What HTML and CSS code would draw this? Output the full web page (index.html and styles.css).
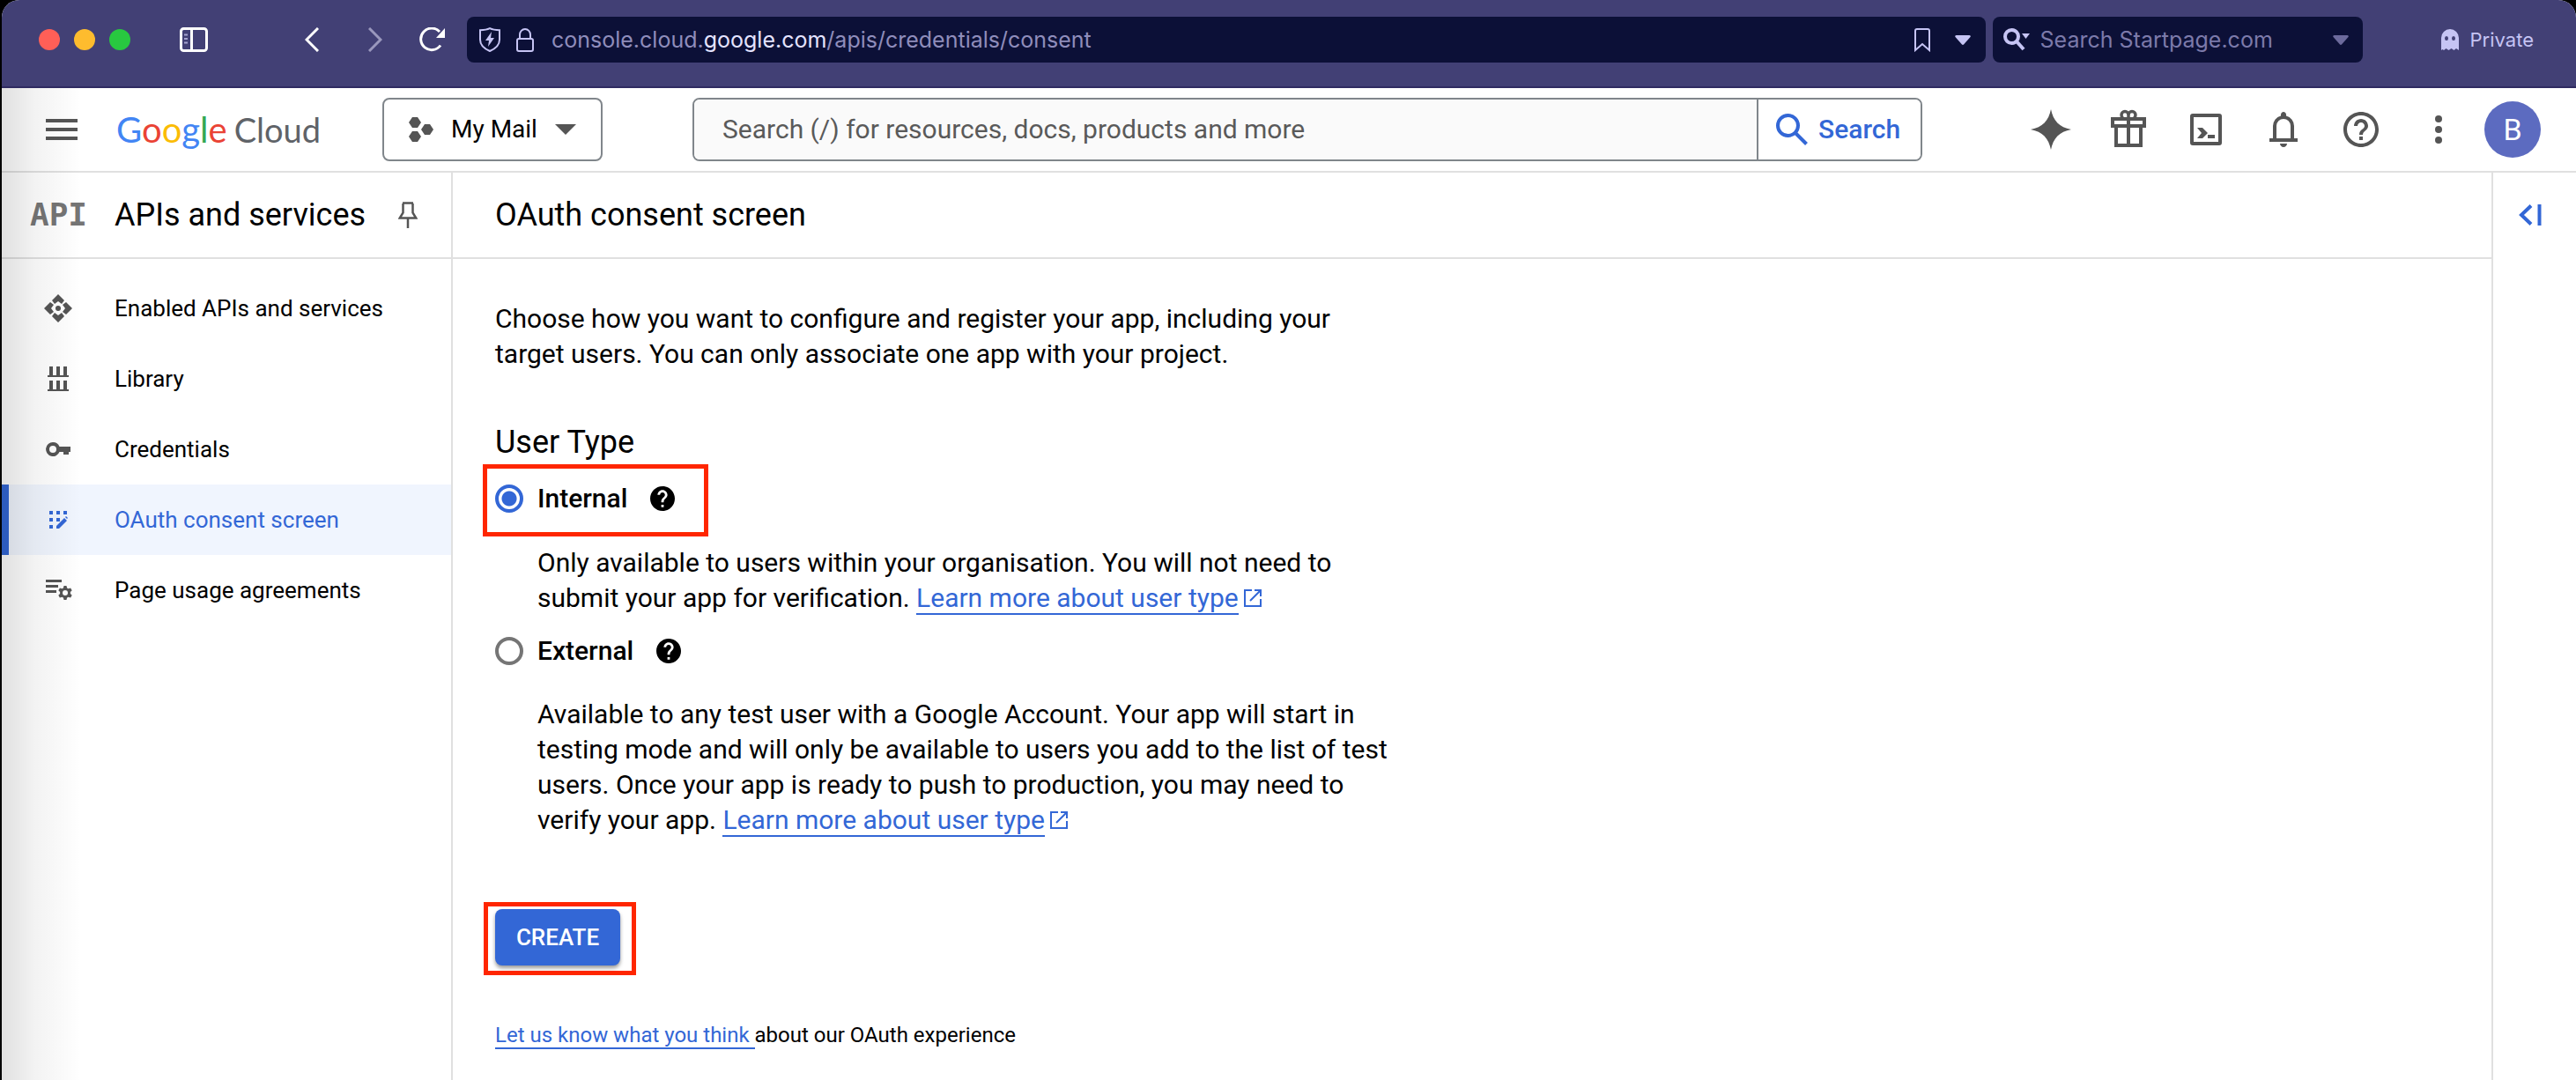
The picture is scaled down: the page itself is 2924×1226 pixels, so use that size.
FILE: index.html
```html
<!DOCTYPE html>
<html lang="en-GB">
<head>
<meta charset="utf-8">
<title>OAuth consent screen – APIs and services</title>
<link rel="stylesheet" href="styles.css">
</head>
<body>
<div class="window">
  <header class="chrome">
    <div class="lights">
      <button class="light light-close" aria-label="Close"></button>
      <button class="light light-min" aria-label="Minimise"></button>
      <button class="light light-max" aria-label="Zoom"></button>
    </div>
    <button class="icon-btn tabs-btn" aria-label="Tabs panel"><svg width="32" height="28" viewBox="0 0 32 28" fill="none" stroke="#fff" stroke-width="3"><rect x="1.500" y="1.500" width="29" height="25" rx="3"/><path d="M13.500 1v26"/><path d="M5 8.500h4M5 13h4M5 17.500h4" stroke="#a5a3cf" stroke-width="2"/></svg></button>
    <button class="icon-btn back-btn" aria-label="Back"><svg width="16" height="28" viewBox="0 0 16 28" fill="none" stroke="#fff" stroke-width="3"><path d="M15 1 2 14l13 13"/></svg></button>
    <button class="icon-btn forward-btn" aria-label="Forward"><svg width="16" height="28" viewBox="0 0 16 28" fill="none" stroke="#9a98bd" stroke-width="3"><path d="M1 1l13 13L1 27"/></svg></button>
    <button class="icon-btn reload-btn" aria-label="Reload"><svg width="30" height="28" viewBox="0 0 30 28" fill="none" stroke="#fff" stroke-width="3"><path d="M24 20.500A12.300 12.300 0 1 1 23 5"/><path d="M29 1v11H19z" fill="#fff" stroke="none"/></svg></button>
    <div class="address">
      <svg width="24" height="28" viewBox="0 0 24 28" fill="none" stroke="#c6c4f4" stroke-width="2"><path d="M12 1.200c3 1.500 7 2 11 2V14c0 6-4 10-11 13C5 24 1 20 1 14V3.200c4 0 8-.5 11-2z"/><path d="M14 5 7 15h4l-1 7 7-10h-4z" fill="#c6c4f4" stroke="none"/></svg>
      <svg class="lock" width="20" height="27" viewBox="0 0 20 27" fill="none" stroke="#c6c4f4" stroke-width="2"><rect x="1" y="12" width="18" height="14" rx="2"/><path d="M4 12V7.500a6 6.500 0 0 1 12 0V12"/></svg>
      <div class="url" role="textbox" aria-label="Address" contenteditable="true" spellcheck="false">console.cloud.<span class="url-host">google.com</span>/apis/credentials/consent</div>
      <button class="icon-btn" aria-label="Bookmark"><svg width="18" height="27" viewBox="0 0 18 27" fill="none" stroke="#c6c4f4" stroke-width="2"><path d="M1 25V3a2 2 0 0 1 2-2h12a2 2 0 0 1 2 2v22l-8-7z"/></svg></button>
      <button class="icon-btn" aria-label="Address history"><svg width="18" height="11" viewBox="0 0 18 11"><path d="M1.500 0h15q2 .5 1 2L10 10.500q-1 .8-2 0L.5 2q-1-1.500 1-2z" fill="#c6c4f4"/></svg></button>
    </div>
    <div class="startpage">
      <svg width="30" height="26" viewBox="0 0 30 26" fill="none" stroke="#c6c4f4" stroke-width="4"><circle cx="9.500" cy="9.500" r="7.500"/><path d="m15 15 8 9"/><path d="M21 6h9l-4.500 6z" fill="#c6c4f4" stroke="none"/></svg>
      <input class="startpage-input" type="text" placeholder="Search Startpage.com" aria-label="Search Startpage.com">
      <button class="icon-btn" aria-label="Search engines"><svg width="18" height="11" viewBox="0 0 18 11"><path d="M1.500 0h15q2 .5 1 2L10 10.500q-1 .8-2 0L.5 2q-1-1.500 1-2z" fill="#6c6a9c"/></svg></button>
    </div>
    <div class="private"><svg width="22" height="24" viewBox="0 0 22 24"><path d="M1 24V10a10 10 0 0 1 20 0v14l-3-2-2.500 2-3-2-3 2-3-2L4 24l-1.500-1z" fill="#c6c4f4"/><g fill="#424075"><ellipse cx="7" cy="10.500" rx="2" ry="2.500"/><ellipse cx="15" cy="10.500" rx="2" ry="2.500"/></g></svg>Private</div>
  </header>

  <div class="page">
    <header class="topbar">
      <button class="icon-btn menu-btn" aria-label="Main menu"><svg width="36" height="24" viewBox="0 0 36 24" fill="#555"><path d="M0 0h36v4H0zM0 10h36v4H0zM0 20h36v4H0z"/></svg></button>
      <a class="logo" href="#"><span class="logo-google"><span class="g-blue">G</span><span class="g-red">o</span><span class="g-yellow">o</span><span class="g-blue">g</span><span class="g-green">l</span><span class="g-red">e</span></span><span class="logo-cloud">Cloud</span></a>
      <button class="project"><svg width="28" height="28" viewBox="0 0 28 28" fill="#555"><path d="M4 0h6l4 6-4 6H4L0 6zM4 16h6l4 6-4 6H4l-4-6zM18 8h6l4 6-4 6h-6l-4-6z"/></svg><span>My Mail</span><svg width="24" height="12" viewBox="0 0 24 12"><path d="M0 0h24L12 12z" fill="#555"/></svg></button>
      <form class="search">
        <input class="search-input" type="text" placeholder="Search (/) for resources, docs, products and more" aria-label="Search (/) for resources, docs, products and more">
        <button class="search-btn" type="button"><svg width="36" height="36" viewBox="0 0 36 36" fill="none" stroke="#3367d6" stroke-width="4"><circle cx="13.500" cy="13.500" r="11.500"/><path d="m21.500 21.500 13 13"/></svg>Search</button>
      </form>
      <nav class="tools" aria-label="Tools">
        <button class="icon-btn" aria-label="Gemini"><svg viewBox="0 0 48 48"><path d="M24 1c2.500 13 9.500 20.500 23 23-13.500 2.500-20.500 10-23 23C21.500 34 14.500 26.500 1 24 14.500 21.500 21.500 14 24 1z"/></svg></button>
        <button class="icon-btn" aria-label="Free trial"><svg viewBox="0 0 48 48" fill="none" stroke="#555" stroke-width="4"><path d="M6 12h36v8H6zM10 20v22h28V20M24 10v32"/><path d="M24 11V7.500a4 4 0 0 0-8 0q0 2 1.500 3.500M24 11V7.500a4 4 0 0 1 8 0q0 2-1.500 3.500" stroke-width="3.500"/></svg></button>
        <button class="icon-btn" aria-label="Cloud Shell"><svg viewBox="0 0 48 48"><path fill-rule="evenodd" d="M9 6h30a3 3 0 0 1 3 3v30a3 3 0 0 1-3 3H9a3 3 0 0 1-3-3V9a3 3 0 0 1 3-3zm1 4v28h28V10z"/><path d="M14 22h6l6 6-6 6h-6l5-6zM26 30h8v4h-8z"/></svg></button>
        <button class="icon-btn" aria-label="Notifications"><svg viewBox="0 0 24 24"><path d="M4 19v-2h2v-7q0-2.075 1.250-3.687T10.500 4.200v-.7q0-.625.438-1.062T12 2t1.063.438T13.500 3.500v.7q2 .5 3.250 2.113T18 10v7h2v2zm8 3q-.825 0-1.412-.587T10 20h4q0 .825-.587 1.413T12 22m-4-5h8v-7q0-1.650-1.175-2.825T12 6 9.175 7.175 8 10z"/></svg></button>
        <button class="icon-btn" aria-label="Help"><svg viewBox="0 0 24 24"><path d="M11 18h2v-2h-2v2zm1-16C6.480 2 2 6.480 2 12s4.480 10 10 10 10-4.480 10-10S17.520 2 12 2zm0 18c-4.410 0-8-3.590-8-8s3.590-8 8-8 8 3.590 8 8-3.590 8-8 8zm0-14c-2.210 0-4 1.790-4 4h2c0-1.100.9-2 2-2s2 .9 2 2c0 2-3 1.750-3 5h2c0-2.250 3-2.500 3-5 0-2.210-1.790-4-4-4z"/></svg></button>
        <button class="icon-btn" aria-label="More"><svg viewBox="0 0 48 48"><circle cx="24" cy="12" r="4"/><circle cx="24" cy="24" r="4"/><circle cx="24" cy="36" r="4"/></svg></button>
        <button class="avatar" aria-label="Account: B">B</button>
      </nav>
    </header>

    <div class="layout">
      <aside class="sidebar">
        <div class="side-head">
          <span class="api-mark">API</span>
          <h2 class="side-title">APIs and services</h2>
          <button class="icon-btn" aria-label="Pin"><svg width="22" height="30" viewBox="0 0 22 30" fill="none" stroke="#555" stroke-width="2.500"><path d="M5 1.500h12M5.500 2v10.500L1.800 18.500h18.400L16.500 12.500V2M11 19v11"/></svg></button>
        </div>
        <nav class="side-nav" aria-label="APIs and services">
          <a class="side-link" href="#"><svg viewBox="0 0 32 32"><path d="M16 0l7 7-3 4-4-3-4 3-3-4zM16 32l7-7-3-4-4 3-4-3-3 4zM0 16l7-7 4 3-3 4 3 4-4 3zM32 16l-7-7-4 3 3 4-3 4 4 3z"/><circle cx="16" cy="16" r="3"/></svg>Enabled APIs and services</a>
          <a class="side-link" href="#"><svg viewBox="0 0 32 32"><path d="M6 2h4v10h4V2h4v10h4V2h4v10h2v2H4v-2h2zM6 18h4v10h4V18h4v10h4V18h4v10h2v2H4v-2h2z"/></svg>Library</a>
          <a class="side-link" href="#"><svg viewBox="0 0 32 32"><path fill-rule="evenodd" d="M10 8a8 8 0 0 1 7.500 5H30v6h-2v3h-6v-3h-4.500A8 8 0 1 1 10 8zm0 4a4 4 0 1 0 0 8 4 4 0 0 0 0-8z"/></svg>Credentials</a>
          <a class="side-link side-link-active" href="#" aria-current="page"><svg viewBox="0 0 32 32"><path d="M6 6h4v4H6zM14 6h4v4h-4zM22 6h4v4h-4zM6 14h4v4H6zM14 14h4v4h-4zM6 22h4v4H6zM14 26v-3l9-9 3 3-9 9zM24 13l1-1 2 2-1 1z"/></svg>OAuth consent screen</a>
          <a class="side-link" href="#"><svg viewBox="0 0 32 32"><path d="M2 4h18v3H2zM2 10h14v3H2zM2 16h12v3H2z"/><path fill-rule="evenodd" d="M22.500 11h3l.6 2.400 1.600.9 2.400-.7 1.600 2.700-1.800 1.700v2l1.800 1.700-1.600 2.700-2.400-.7-1.600.9-.6 2.400h-3l-.6-2.400-1.600-.9-2.400.7-1.600-2.700 1.800-1.700v-2l-1.800-1.700 1.600-2.700 2.400.7 1.600-.9zM24 16a3 3 0 1 0 0 6 3 3 0 0 0 0-6z"/></svg>Page usage agreements</a>
        </nav>
      </aside>

      <main class="main">
        <div class="main-head"><h1 class="main-title">OAuth consent screen</h1></div>
        <div class="content">
          <p class="intro">Choose how you want to configure and register your app, including your target users. You can only associate one app with your project.</p>
          <h2 class="section-title" id="user-type">User Type</h2>
          <div role="radiogroup" aria-labelledby="user-type">
            <div class="option option-marked">
              <input class="radio" type="radio" name="type" id="internal" checked>
              <label class="option-label" for="internal">Internal</label>
              <button class="icon-btn" aria-label="About internal"><svg class="help" viewBox="2 2 20 20"><path d="M12 2C6.480 2 2 6.480 2 12s4.480 10 10 10 10-4.480 10-10S17.520 2 12 2zm1 17h-2v-2h2v2zm2.070-7.750l-.9.920C13.450 12.900 13 13.500 13 15h-2v-.5c0-1.100.450-2.100 1.170-2.830l1.240-1.260c.370-.360.590-.860.590-1.410 0-1.100-.9-2-2-2s-2 .9-2 2H8c0-2.210 1.790-4 4-4s4 1.790 4 4c0 .880-.360 1.680-.930 2.250z"/></svg></button>
            </div>
            <p class="option-text">Only available to users within your organisation. You will not need to submit your app for verification. <a class="link" href="#">Learn more about user type</a><svg class="ext" viewBox="0 0 20 20" fill="none" stroke="#3367d6" stroke-width="2"><path d="M9 1H1v18h18v-8M12 1h7v7M19 1 7 13"/></svg></p>
            <div class="option option-plain">
              <input class="radio" type="radio" name="type" id="external">
              <label class="option-label" for="external">External</label>
              <button class="icon-btn" aria-label="About external"><svg class="help" viewBox="2 2 20 20"><path d="M12 2C6.480 2 2 6.480 2 12s4.480 10 10 10 10-4.480 10-10S17.520 2 12 2zm1 17h-2v-2h2v2zm2.070-7.750l-.9.920C13.450 12.900 13 13.500 13 15h-2v-.5c0-1.100.450-2.100 1.170-2.830l1.240-1.260c.370-.360.590-.860.590-1.410 0-1.100-.9-2-2-2s-2 .9-2 2H8c0-2.210 1.790-4 4-4s4 1.790 4 4c0 .880-.360 1.680-.930 2.250z"/></svg></button>
            </div>
            <p class="option-text">Available to any test user with a Google Account. Your app will start in testing mode and will only be available to users you add to the list of test users. Once your app is ready to push to production, you may need to verify your app. <a class="link" href="#">Learn more about user type</a><svg class="ext" viewBox="0 0 20 20" fill="none" stroke="#3367d6" stroke-width="2"><path d="M9 1H1v18h18v-8M12 1h7v7M19 1 7 13"/></svg></p>
          </div>
          <div class="create-mark"><button class="create">CREATE</button></div>
          <p class="feedback"><a class="link" href="#">Let us know what you think </a>about our OAuth experience</p>
        </div>
      </main>

      <aside class="panel">
        <button class="icon-btn" aria-label="Show panel"><svg width="26" height="24" viewBox="0 0 26 24" fill="none" stroke="#3367d6" stroke-width="4"><path d="M14 1.500 3 12l11 10.500M23.500 0v24"/></svg></button>
      </aside>
    </div>
  </div>
</div>
</body>
</html>
```
FILE: styles.css
```css
* {
  box-sizing: border-box;
}

body {
  margin: 0;
  background: #000;
  color: #000;
  font-family: Roboto, "Liberation Sans", sans-serif;
  font-size: 30px;
  line-height: 40px;
}

button,
input {
  font: inherit;
}

h1,
h2,
p {
  margin: 0;
  font-weight: 400;
}

svg {
  display: block;
  flex: none;
}

.window {
  min-height: 100vh;
  margin-left: 2px;
  display: flex;
  flex-direction: column;
  border-radius: 20px 20px 0 0;
  overflow: hidden;
  background: #fff;
}

.icon-btn {
  display: flex;
  padding: 0;
  border: 0;
  background: none;
}

/* Browser toolbar */

.chrome {
  display: flex;
  align-items: center;
  height: 100px;
  padding: 0 48px 8px 42px;
  background: #424075;
  border-bottom: 2px solid #2f2b61;
  font-family: Inter, "Liberation Sans", sans-serif;
  font-size: 25px;
}

.lights {
  display: flex;
  gap: 16px;
}

.light {
  width: 24px;
  height: 24px;
  padding: 0;
  border: 0;
  border-radius: 50%;
}

.light-close { background: #ff5f57; }
.light-min { background: #febc2e; }
.light-max { background: #28c840; }

.tabs-btn { margin-left: 56px; }
.back-btn { margin-left: 110px; }
.forward-btn { margin-left: 56px; }
.reload-btn { margin-left: 42px; }

.address,
.startpage {
  display: flex;
  align-items: center;
  height: 52px;
  border-radius: 8px;
  background: #0c1037;
}

.address {
  flex: 1;
  min-width: 0;
  margin-left: 24px;
  padding: 0 17px 0 14px;
}

.lock {
  margin-left: 18px;
}

.url {
  flex: 1;
  margin-left: 20px;
  color: #8f8dbb;
  white-space: nowrap;
}

.url-host {
  color: #e4e3ff;
}

.address .icon-btn + .icon-btn {
  margin-left: 28px;
}

.startpage {
  width: 420px;
  margin-left: 8px;
  padding: 0 16px 0 12px;
}

.startpage-input {
  flex: 1;
  min-width: 0;
  margin-left: 12px;
  padding: 0;
  border: 0;
  background: none;
}

.startpage-input::placeholder {
  color: #7c7aaa;
}

.private {
  display: flex;
  align-items: center;
  gap: 12px;
  margin-left: 88px;
  color: #c6c4f4;
  font-size: 22px;
}

/* Console page */

.page {
  position: relative;
  flex: 1;
  display: flex;
  flex-direction: column;
}

.page::after {
  content: "";
  position: absolute;
  inset: 0 auto 0 0;
  width: 90px;
  background: linear-gradient(90deg, rgba(0, 0, 0, 0.12), rgba(0, 0, 0, 0.05) 40%, rgba(0, 0, 0, 0));
  pointer-events: none;
}

.topbar {
  display: flex;
  align-items: center;
  height: 96px;
  padding: 0 40px 0 50px;
  border-bottom: 2px solid #e0e0e0;
}

.logo {
  display: flex;
  align-items: baseline;
  gap: 8px;
  width: 256px;
  margin-left: 44px;
  font-family: Lato, "Liberation Sans", sans-serif;
  text-decoration: none;
}

.logo-google { font-size: 40px; }
.logo-cloud { font-size: 38px; color: #5f6368; }
.g-blue { color: #4285f4; }
.g-red { color: #ea4335; }
.g-yellow { color: #fbbc05; }
.g-green { color: #34a853; }

.project {
  display: flex;
  align-items: center;
  width: 250px;
  height: 72px;
  margin-left: 46px;
  padding: 0 28px;
  border: 2px solid #80868b;
  border-radius: 8px;
  background: #fff;
  font-size: 28px;
  color: #000;
}

.project span {
  flex: 1;
  margin-left: 20px;
  text-align: left;
}

.search {
  flex: 1;
  display: flex;
  height: 72px;
  margin-left: 102px;
  border: 2px solid #80868b;
  border-radius: 8px;
  overflow: hidden;
}

.search-input {
  flex: 1;
  min-width: 0;
  padding: 0 32px;
  border: 0;
  background: #fafafa;
}

.search-input::placeholder {
  color: #5a5a5a;
}

.search-btn {
  display: flex;
  align-items: center;
  gap: 12px;
  width: 186px;
  padding: 0 20px;
  border: 0;
  border-left: 2px solid #80868b;
  background: #fff;
  color: #3367d6;
  font-weight: 500;
}

.tools {
  display: flex;
  align-items: center;
  gap: 40px;
  margin-left: 122px;
}

.tools svg {
  width: 48px;
  height: 48px;
  fill: #555;
}

.tools svg[fill="none"] {
  fill: none;
}

.avatar {
  width: 64px;
  height: 64px;
  margin-left: -12px;
  padding: 0;
  border: 0;
  border-radius: 50%;
  background: #5c6bc0;
  color: #fff;
  font-size: 34px;
}

.layout {
  flex: 1;
  display: flex;
}

/* Side navigation */

.sidebar {
  width: 512px;
  border-right: 2px solid #e0e0e0;
}

.side-head,
.main-head {
  display: flex;
  align-items: center;
  height: 98px;
  border-bottom: 2px solid #e0e0e0;
}

.side-head {
  padding: 0 38px 0 32px;
}

.api-mark {
  width: 96px;
  color: #757575;
  font-family: "DejaVu Sans Mono", monospace;
  font-size: 36px;
  font-weight: 700;
}

.side-title {
  flex: 1;
  font-size: 36px;
}

.side-nav {
  padding-top: 16px;
}

.side-link {
  display: flex;
  align-items: center;
  gap: 48px;
  height: 80px;
  padding-left: 48px;
  color: #000;
  font-size: 26px;
  text-decoration: none;
}

.side-link svg {
  width: 32px;
  height: 32px;
  fill: #555;
}

.side-link-active {
  padding-left: 40px;
  border-left: 8px solid #3367d6;
  background: #f0f5fe;
  color: #3367d6;
}

.side-link-active svg {
  fill: #3367d6;
}

/* Main column */

.main {
  flex: 1;
  min-width: 0;
}

.main-head {
  padding-left: 48px;
}

.main-title,
.section-title {
  font-size: 36px;
}

.content {
  max-width: 1080px;
  padding: 48px 16px 16px 48px;
}

.intro {
  max-width: 980px;
}

.section-title {
  margin-top: 60px;
}

.option {
  display: flex;
  align-items: center;
  gap: 16px;
  height: 80px;
}

.option-marked {
  width: 256px;
  height: 82px;
  margin: 5px 0 10px -14px;
  padding: 0 9px 4px;
  border: 5px solid #ff2600;
}

.option-plain {
  margin-bottom: 12px;
}

.radio {
  appearance: none;
  width: 32px;
  height: 32px;
  margin: 0;
  border: 4px solid #757575;
  border-radius: 50%;
}

.radio:checked {
  border-color: #3367d6;
  background: radial-gradient(circle, #3367d6 8px, #fff 9px);
}

.option-label {
  margin-right: 10px;
  font-weight: 500;
}

.help {
  width: 28px;
  height: 28px;
}

.option-text {
  padding-left: 48px;
}

.link {
  border-bottom: 2px solid #3367d6;
  color: #3367d6;
  text-decoration: none;
}

.ext {
  display: inline-block;
  width: 20px;
  height: 20px;
  margin-left: 6px;
}

.create-mark {
  width: 173px;
  height: 83px;
  margin: 73px 0 48px -13px;
  padding: 3px 8px;
  border: 5px solid #ff2600;
}

.create {
  width: 142px;
  height: 64px;
  padding: 0;
  border: 0;
  border-radius: 8px;
  background: #3367d6;
  box-shadow: 0 3px 4px rgba(0, 0, 0, 0.4);
  color: #fff;
  font-size: 26px;
  font-weight: 500;
}

.feedback {
  font-size: 24px;
  white-space: pre-wrap;
}

/* Right panel */

.panel {
  display: flex;
  justify-content: center;
  width: 96px;
  padding: 36px 10px 0 0;
  border-left: 2px solid #e0e0e0;
}
```
